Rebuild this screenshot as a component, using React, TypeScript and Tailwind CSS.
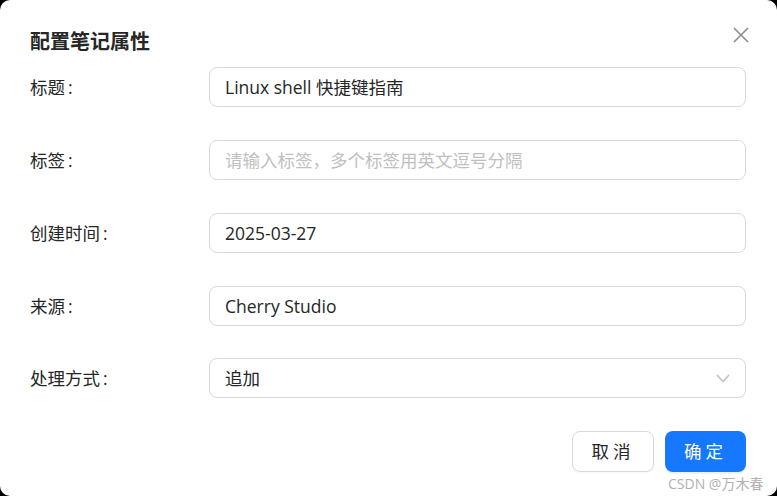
import React from "react";

const font = { fontFamily: '"Open Sans", "Noto Sans CJK SC", sans-serif' };

function Row({ label, children }: { label: string; children: React.ReactNode }) {
  return (
    <div className="flex items-center h-[40px] mb-[33px]">
      <div className="w-[179px] shrink-0 text-[17.5px] text-[#262626] flex items-center">
        <span>{label}</span>
        <span className="ml-[3px]">:</span>
      </div>
      <div className="flex-1 h-[40px]">{children}</div>
    </div>
  );
}

function Input({ value, placeholder }: { value?: string; placeholder?: string }) {
  return (
    <div className="h-full border border-[#d9d9d9] rounded-[8px] flex items-center pl-[15px] text-[17.5px]">
      {value ? (
        <span className="text-[#262626]">{value}</span>
      ) : (
        <span className="text-[#bfbfbf]">{placeholder}</span>
      )}
    </div>
  );
}

export default function App() {
  return (
    <div className="w-[777px] h-[496px] bg-black" style={font}>
      <div className="relative w-full h-full bg-white rounded-[10px] pl-[30px] pr-[31px] pt-[24px]">
        <div className="h-[36px] flex items-center">
          <h1 className="text-[20px] font-semibold text-[#262626]">配置笔记属性</h1>
        </div>
        <button className="absolute left-[733px] top-[27px] w-[16px] h-[16px]">
          <svg width="16" height="16" viewBox="0 0 16 16" fill="none" stroke="#8c8c8c" strokeWidth="1.6">
            <path d="M1 1L15 15M15 1L1 15" />
          </svg>
        </button>
        <div className="mt-[7px]">
          <Row label="标题">
            <Input value="Linux shell 快捷键指南" />
          </Row>
          <Row label="标签">
            <Input placeholder="请输入标签，多个标签用英文逗号分隔" />
          </Row>
          <Row label="创建时间">
            <Input value="2025-03-27" />
          </Row>
          <Row label="来源">
            <Input value="Cherry Studio" />
          </Row>
          <div className="-mt-px">
            <Row label="处理方式">
              <div className="h-full border border-[#d9d9d9] rounded-[8px] flex items-center justify-between pl-[15px] pr-[15px] text-[17.5px]">
                <span className="text-[#262626]">追加</span>
                <svg width="14" height="9" viewBox="0 0 14 9" fill="none" stroke="#bfbfbf" strokeWidth="1.5">
                  <path d="M1 1L7 7.5L13 1" />
                </svg>
              </div>
            </Row>
          </div>
        </div>
        <div className="flex justify-end gap-[11px]">
          <button className="w-[82px] h-[41px] border border-[#d9d9d9] rounded-[8px] bg-white text-[17.5px] text-[#262626] tracking-[4px] shadow-[0_2px_0_rgba(0,0,0,0.02)]">
            取消
          </button>
          <button className="w-[81px] h-[41px] rounded-[8px] bg-[#1677ff] text-white text-[17.5px] tracking-[4px] shadow-[0_2px_0_rgba(5,145,255,0.1)]">
            确定
          </button>
        </div>
        <div className="absolute left-[668px] top-[473px] text-[14px] text-[#b0b0b0] whitespace-nowrap">
          CSDN @万木春
        </div>
      </div>
    </div>
  );
}
